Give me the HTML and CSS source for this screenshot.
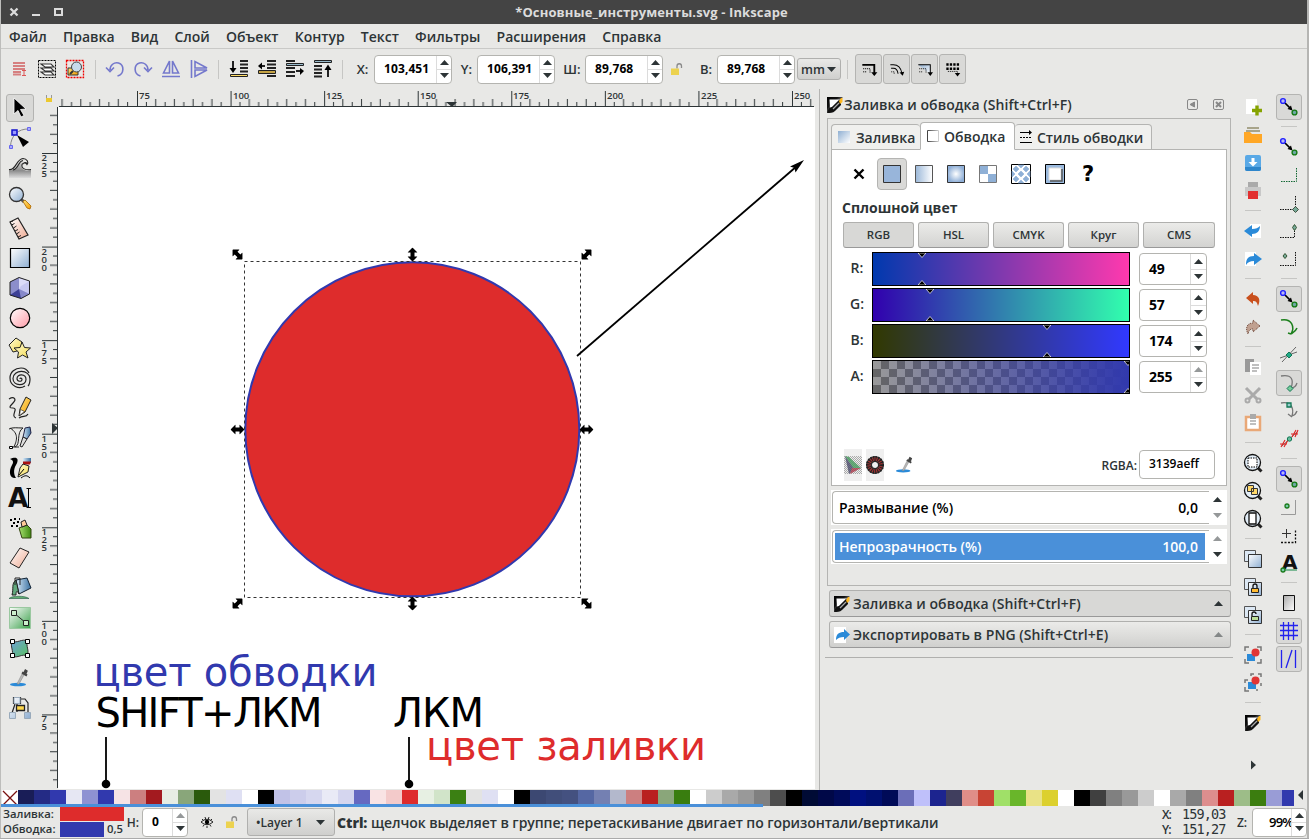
FILE: index.html
```html
<!DOCTYPE html>
<html lang="ru">
<head>
<meta charset="utf-8">
<title>*Основные_инструменты.svg - Inkscape</title>
<link rel="stylesheet" href="styles.css">
</head>
<body>
<svg class="defs" width="0" height="0">
  <defs>
    <linearGradient id="blue" x1="0" y1="0" x2="1" y2="1"><stop offset="0" stop-color="#fff"/><stop offset="1" stop-color="#8fafd2"/></linearGradient>
    <linearGradient id="blueR" x1="1" y1="1" x2="0" y2="0"><stop offset="0" stop-color="#fff"/><stop offset="1" stop-color="#8fafd2"/></linearGradient>
    <linearGradient id="flat" x1="0" y1="0" x2="1" y2="0"><stop offset="0" stop-color="#9bb8d9"/><stop offset="1" stop-color="#fff"/></linearGradient>
    <radialGradient id="rad"><stop offset="0" stop-color="#fff"/><stop offset="1" stop-color="#90b0d8"/></radialGradient>
    <linearGradient id="pink" x1="0" y1="0" x2="1" y2="1"><stop offset="0" stop-color="#fff"/><stop offset="1" stop-color="#ff9aa6"/></linearGradient>
    <linearGradient id="skin" x1="0" y1="0" x2="1" y2="1"><stop offset="0" stop-color="#fff"/><stop offset="1" stop-color="#eeaa92"/></linearGradient>
    <linearGradient id="yel" x1="0" y1="0" x2="1" y2="1"><stop offset="0" stop-color="#fffbd8"/><stop offset="1" stop-color="#f4dc50"/></linearGradient>
    <linearGradient id="orange" x1="0" y1="0" x2="1" y2="1"><stop offset="0" stop-color="#ffe680"/><stop offset="1" stop-color="#f29a00"/></linearGradient>
    <linearGradient id="green" x1="0" y1="0" x2="1" y2="1"><stop offset="0" stop-color="#fff"/><stop offset="1" stop-color="#3aa04a"/></linearGradient>
    <linearGradient id="grey" x1="0" y1="0" x2="1" y2="1"><stop offset="0" stop-color="#aaa"/><stop offset="1" stop-color="#fff"/></linearGradient>
    <linearGradient id="wave" x1="0" y1="0" x2="0" y2="1"><stop offset="0" stop-color="#e8e8e6"/><stop offset=".6" stop-color="#8c8c8c"/><stop offset="1" stop-color="#ddd"/></linearGradient>
    <linearGradient id="teal" x1="0" y1="0" x2="1" y2="1"><stop offset="0" stop-color="#6fa0d8"/><stop offset="1" stop-color="#58c060"/></linearGradient>
    <linearGradient id="can" x1="0" y1="0" x2="1" y2="0"><stop offset="0" stop-color="#a8e070"/><stop offset="1" stop-color="#3d8a10"/></linearGradient>
    <linearGradient id="steel" x1="0" y1="0" x2="1" y2="0"><stop offset="0" stop-color="#d8eaf8"/><stop offset="1" stop-color="#3a70a0"/></linearGradient>
    <linearGradient id="ink" x1="0" y1="0" x2="1" y2="1"><stop offset="0" stop-color="#000"/><stop offset=".35" stop-color="#111"/><stop offset=".75" stop-color="#ddd"/><stop offset="1" stop-color="#e8e8e6"/></linearGradient>
    <linearGradient id="fade" x1="0" y1="0" x2="1" y2="0"><stop offset="0" stop-color="#444"/><stop offset="1" stop-color="#ccc"/></linearGradient>
    <linearGradient id="alpha" x1="0" y1="0" x2="1" y2="0"><stop offset="0" stop-color="#3139ae" stop-opacity="0"/><stop offset="1" stop-color="#3139ae"/></linearGradient>
    <pattern id="checks" width="16" height="16" patternUnits="userSpaceOnUse"><rect width="16" height="16" fill="#999"/><path d="M0 8h8v8H0zM8 0h8v8H8z" fill="#666"/></pattern>
    <pattern id="dither" width="2" height="2" patternUnits="userSpaceOnUse"><path d="M0 0h1v1H0zM1 1h1v1H1z" fill="#eee"/></pattern>
    <symbol id="up" viewBox="0 0 9 5"><path d="M0 5L4.500 0 9 5z"/></symbol>
    <symbol id="down" viewBox="0 0 9 5"><path d="M0 0h9L4.500 5z"/></symbol>
    <symbol id="lock" viewBox="0 0 12 12"><path d="M6 5.500V3a2 2 0 0 1 4.500 0v2" fill="none" stroke="#8a8a8a" stroke-width="1.300"/><path d="M0 5.500h8V12H0z" fill="#ecd24f"/></symbol>
    <symbol id="fillstroke" viewBox="0 0 16 16"><path d="M0 0h16L0 16z" fill="url(#ink)"/><path d="M2.500 2.500H13L3 12z" fill="#fff"/><path d="M0 16c1-3 2-6 5-6l7-7 2 1v4l-6 6c-2 2-5 2-8 2z" fill="#111"/><path d="M6 12l6-6" stroke="#aaa" stroke-width="1.200"/><path d="M12 4l2-3h1.500v4L13 7z" fill="#ffb820"/></symbol>
    <symbol id="dropper" viewBox="0 0 22 22"><ellipse cx="9" cy="17.500" rx="8" ry="1.700" fill="#2a8ad8"/><path d="M8 17l5-10 2 1-5 9z" fill="#bbb" stroke="#888" stroke-width=".6"/><path d="M13 5.500l5 3M15.500 5.500l1-2 1 .6-.8 2z" fill="#444" stroke="#444" stroke-width="2.200"/></symbol>
    <symbol id="snap" viewBox="0 0 22 22"><path d="M7 7l6 6" stroke="#000" stroke-width="1.700"/><path d="M14.500 14.500l-5-1.500 3.500-3.500z"/><circle cx="5" cy="5" r="2.400" fill="#b9b9f4" stroke="#22f" stroke-width="1.400"/><circle cx="16.500" cy="16.500" r="2.400" fill="#6fa8a8" stroke="#157a15" stroke-width="1.400"/></symbol>
    <symbol id="lens" viewBox="0 0 22 22"><path d="M15 15l4.500 4.500" stroke="#222" stroke-width="3"/><circle cx="10.500" cy="10.500" r="8" fill="#e2edf7" stroke="#111" stroke-width="1.300"/></symbol>
    <symbol id="stack" viewBox="0 0 22 22"><path d="M2.500 2.500h11v11h-11z" fill="#dce8f4" stroke="#555"/><path d="M6.500 6.500h13v13h-13z" fill="url(#blue)" stroke="#333"/></symbol>
    <symbol id="resize" viewBox="0 0 14 10"><path d="M0 5l5-5v3h4V0l5 5-5 5V7H5v3z"/></symbol>
    <symbol id="mark" viewBox="0 0 8 5"><path d="M0 0h8L4 4.500z" stroke="#fff" stroke-width=".7"/></symbol>
  </defs>
</svg>

<div class="window">
  <header class="titlebar">
    <svg class="wm" viewBox="0 0 60 24"><path d="M9.500 8.500l7 7M16.500 8.500l-7 7" stroke-width="2.300"/><path d="M31 15h8" stroke-width="2"/><path d="M54 9h7v6h-7z" stroke-width="2"/></svg>
    <span class="title">*Основные_инструменты.svg - Inkscape</span>
  </header>

  <nav class="menu"><span>Файл</span><span>Правка</span><span>Вид</span><span>Слой</span><span>Объект</span><span>Контур</span><span>Текст</span><span>Фильтры</span><span>Расширения</span><span>Справка</span></nav>

  <div class="toolbar">
    <svg class="ic" viewBox="0 0 22 22"><path d="M5 5h12M5 8h12M5 11h12M5 14h8M5 16.500h8" stroke="#d68080" stroke-width="2.200"/><path d="M14 12.500h4M16 12.500v5M14 17.500h4" stroke="#d55" fill="none"/></svg>
    <svg class="ic" viewBox="0 0 22 22"><path d="M2.500 2.500h17v17h-17z" fill="none" stroke="#000" stroke-dasharray="2 1"/><path d="M5 14l4 3h9l-3-3zM5 10l4 3h9l-3-3zM5 6l4 3h9l-3-3z" fill="#fff" stroke="#333" stroke-width="1.100"/></svg>
    <svg class="ic" viewBox="0 0 22 22"><path d="M2.500 2.500h17v17h-17z" fill="none" stroke="#e00" stroke-width="1.300" stroke-dasharray="2 1"/><path d="M4 10h10v7H4z" fill="url(#orange)" stroke="#333"/><path d="M9 13l-3 3" stroke="#333" stroke-width="2"/><circle cx="12.500" cy="9" r="5" fill="#c8dcec" stroke="#444"/></svg>
    <i class="vsep"></i>
    <svg class="ic line" viewBox="0 0 22 22"><path d="M6 12C6 7 10 4 14.500 5c6 2 6 11-1 13M2 9.500l4 4 4-4"/></svg>
    <svg class="ic line" viewBox="0 0 22 22"><path d="M16 12c0-5-4-8-8.500-7-6 2-6 11 1 13M20 9.500l-4 4-4-4"/></svg>
    <svg class="ic line" viewBox="0 0 22 22"><path d="M9.500 3v12h-6zM12.500 3v12h6zM2 18.500h18"/></svg>
    <svg class="ic line" viewBox="0 0 22 22"><path d="M3.500 2v18M7 3.500v6.500h12zM7 18.500V12h12z"/></svg>
    <i class="vsep"></i>
    <svg class="ic" viewBox="0 0 22 22"><path d="M12 3h8M12 6.500h8M12 10h8M12 13.500h8M5 3v10" stroke="#222" stroke-width="2"/><path d="M1.500 10h7L5 15z"/><path d="M2.500 16.500h17v2h-17z" fill="#fd6" stroke="#222"/></svg>
    <svg class="ic" viewBox="0 0 22 22"><path d="M11 3h9M11 6.500h9M11 10h9M11 18h9M5 8h4" stroke="#222" stroke-width="2"/><path d="M6 4.500v7L2 8z"/><path d="M2.500 12.500h17v3h-17z" fill="#c6a445" stroke="#222"/></svg>
    <svg class="ic" viewBox="0 0 22 22"><path d="M2 3h9M2 10h9M2 14h9M2 18h9M12 13h5" stroke="#222" stroke-width="2"/><path d="M16 10v7l4-4z"/><path d="M2.500 5.500h17v2h-17z" fill="#9bc" stroke="#222"/></svg>
    <svg class="ic" viewBox="0 0 22 22"><path d="M2 8h8M2 11.500h8M2 15h8M2 18.500h8M16 9v10" stroke="#222" stroke-width="2"/><path d="M12.500 12h7L16 6.500z"/><path d="M2.500 2.500h17v2h-17z" fill="#9bc" stroke="#222"/></svg>
    <i class="vsep"></i>
    <label>X:</label>
    <div class="spin"><b>103,451</b><span><svg><use href="#up"/></svg><svg><use href="#down"/></svg></span></div>
    <label>Y:</label>
    <div class="spin"><b>106,391</b><span><svg><use href="#up"/></svg><svg><use href="#down"/></svg></span></div>
    <label>Ш:</label>
    <div class="spin"><b>89,768</b><span><svg><use href="#up"/></svg><svg><use href="#down"/></svg></span></div>
    <svg class="lock"><use href="#lock"/></svg>
    <label>В:</label>
    <div class="spin"><b>89,768</b><span><svg><use href="#up"/></svg><svg><use href="#down"/></svg></span></div>
    <i></i>
    <div class="combo unit"><span>mm</span><svg><use href="#down"/></svg></div>
    <i class="vsep"></i>
    <div class="tog"><svg class="ic" viewBox="0 0 22 22"><path d="M3 5h15.500v12" fill="none" stroke="#000" stroke-width="2.400"/><path d="M4 10h9v6M4 14h5" fill="none" stroke="#000" stroke-width="1.200" stroke-dasharray="1.500 1"/><path d="M14.500 14.500h8l-4 5z"/></svg></div>
    <div class="tog"><svg class="ic" viewBox="0 0 22 22"><path d="M3 5h4q9 0 11 11M4 9.500h3q5 0 6 7" fill="none" stroke="#000" stroke-width="1.300"/><path d="M4 14h4v3" fill="none" stroke="#000" stroke-dasharray="1.500 1"/><path d="M15 15l6-1-2 5z"/></svg></div>
    <div class="tog"><svg class="ic" viewBox="0 0 22 22"><path d="M3 5h15.500v12z" fill="url(#blueR)"/><path d="M3 5h15.500v12" fill="none" stroke="#000" stroke-width="1.300"/><path d="M4 10h9v6M4 14h5" fill="none" stroke="#000" stroke-dasharray="1.500 1"/><path d="M15 14.500h7l-3.500 5z"/></svg></div>
    <div class="tog"><svg class="ic" viewBox="0 0 22 22"><path d="M3 4.500h17M3 10h17" stroke="#000" stroke-width="3" stroke-dasharray="3 1.500"/><path d="M5 13.500h12.500v3" fill="none" stroke="#000" stroke-dasharray="1.500 1"/><path d="M14 15.500h7l-3.500 4.500z"/></svg></div>
  </div>

  <main class="work">
    <aside class="tools">
      <div class="on"><svg viewBox="0 0 22 22"><path d="M5 1l12 11-5.500.5 3.500 6-3 1.500-3-6.500L5 17z" stroke="#fff" stroke-width=".8"/></svg></div>
      <div><svg viewBox="0 0 22 22"><path d="M1.500 19C2 9 9 1.500 20 2" fill="none" stroke="#888"/><path d="M8 8l12 7-6 5z"/><path d="M3 3h5v5H3z" fill="#99f" stroke="#11c" stroke-width="1.500"/><path d="M18.500.5h3v3h-3zM.5 18.500h3v3h-3z" fill="#aaf" stroke="#66e"/></svg></div>
      <div><svg viewBox="0 0 22 22"><path d="M0 13c4 1 6-1 8-5 2-5 5-6 8-5-3 2-5 6-2 9 2 2 5 2 8 1v8H0z" fill="url(#wave)"/><path d="M0 12.500C7 14 7 2 14 1.500c4 0 6 4 4 6-1-2-4-2-5 0-1 4 4 6 9 5M4 13c6-1 5-9 10-9.500M14 7c1-2 3-2 4-.5" fill="none" stroke="#222" stroke-width="1.100"/></svg></div>
      <div><svg viewBox="0 0 22 22"><path d="M12 12l3 3" stroke="#555" stroke-width="3"/><circle cx="7.500" cy="7.500" r="7" fill="url(#blue)" stroke="#333" stroke-width="1.300"/><path d="M14 14.500l2-1.500 6 6-1 3-3-1z" fill="url(#orange)" stroke="#a60" stroke-width=".8"/></svg></div>
      <div><svg viewBox="0 0 22 22"><path d="M1 5l8-4 10 17-9 4z" fill="url(#skin)" stroke="#222" stroke-width="1.200"/><path d="M1 5l3-1M2.500 8l3-1.500M4.500 11l3-2M6 14l3-1.500M7.500 17l3-2M9 20l3-1.500" stroke="#222"/></svg></div>
      <div><svg viewBox="0 0 22 22"><path d="M1.500 1.500h19v19h-19z" fill="url(#blue)" stroke="#000" stroke-width="1.200"/></svg></div>
      <div><svg viewBox="0 0 22 22"><path d="M1 5l9-4.500L20.500 4v13L12 21.500 1 18z" fill="#a5a7dc"/><path d="M10 1v11l-9 6V5z" fill="#8c8ecb"/><path d="M10 1l10.500 3v13L10 12z" fill="#dcdcf8"/><path d="M10 12l10.500 5-8.500 4.500L1 18z" fill="#3d4096"/><path d="M12 9l-2 3 2 9.500 8.500-4.500V4z" fill="#b9baec" opacity=".6"/><path d="M1 5l9-4.500L20.500 4v13L12 21.500 1 18z" fill="none" stroke="#222"/></svg></div>
      <div><svg viewBox="0 0 22 22"><circle cx="11" cy="11" r="9.700" fill="url(#pink)" stroke="#000" stroke-width="1.200"/></svg></div>
      <div><svg viewBox="0 0 22 22"><path d="M7 1l6 4-1 8-8 2-4-7z" fill="url(#yel)" stroke="#222"/><path d="M13 5l2.500 5.500 6 .5-4.500 4 2 6-5.500-3-5 3 1-6-4.500-4 6-.5z" fill="url(#yel)" stroke="#222"/></svg></div>
      <div><svg viewBox="0 0 22 22"><path d="M11 12c0-1.500 2-1 2 .5 0 2.500-5 2.500-5-1 0-5 9-5 9 1 0 7-13 7-13-1C4 2 21 2 21 12c0 3-1 6-2 7M16 19C10 23 1 19 1 11 1 5 6 1 12 1c4 0 7 3 8 5" fill="none" stroke="#222" stroke-width="1.200"/></svg></div>
      <div><svg viewBox="0 0 22 22"><path d="M0 2c5-3 8 0 4 4-5 5-3 5 0 5 6 0-3 8 3 10M19 17c-2 4-5 1-9 4" fill="none" stroke="#222" stroke-width="1.200"/><path d="M10 19l1-7 6-12 5 3-6 12z" fill="url(#orange)" stroke="#222"/><path d="M10.500 18.500l1-6 4 2z" fill="#fff" stroke="#222" stroke-width=".6"/></svg></div>
      <div><svg viewBox="0 0 22 22"><path d="M0 2c4-2 8-1 14-1C7 5 12 18 6 20M1 20h9M1 1c10 6 6 14 4 19" fill="none" stroke="#222"/><path d="M15 6l1-5 5-1 1 6-4 6-4-2z" fill="url(#steel)" stroke="#224"/><path d="M11 19l3-9 4 2-5 8z" fill="#ddd" stroke="#222"/><path d="M.5 19.500h3v2h-3z" fill="#fff" stroke="#000"/></svg></div>
      <div><svg viewBox="0 0 22 22"><path d="M1 2C7-1 11 1 7 8c-3 5-2 10 0 13C1 22-1 15 3 8c2-3 1-5-2-6z"/><path d="M14 1h8v5h-8z" fill="url(#steel)"/><path d="M14 4.500h8l-1 3h-7z" fill="#a11"/><path d="M9 20l2-9 3-4 6 2-1 6z" fill="url(#yel)" stroke="#222"/><path d="M10 18l5-6M12 21c4-3 6-3 9 0" stroke="#000" fill="none"/></svg></div>
      <div><svg viewBox="0 0 22 22"><text x="-1" y="19.500" class="glyph">A</text><path d="M17.500 1.500h4.500M19.500 1.500v19M17.500 20.500h4.500" stroke="#000"/></svg></div>
      <div><svg viewBox="0 0 22 22"><path d="M1 2h2v2H1zM5 1h2v2H5zM4 5h2v2H4zM8 4h2v2H8zM2 8h2v2H2zM7 8h2v2H7zM10 1h1v2h-1z"/><path d="M10 11l8-3 4 4v9H13z" fill="url(#can)" stroke="#341"/><path d="M12 5l4-2 2 5-5 2z" fill="#fc9" stroke="#222"/></svg></div>
      <div><svg viewBox="0 0 22 22"><path d="M11 1l9 4-10 16-9-5z" fill="url(#skin)" stroke="#222"/></svg></div>
      <div><svg viewBox="0 0 22 22"><path d="M7 3l11-2 4 10-12 6z" fill="url(#steel)" stroke="#123"/><path d="M7 3C2 7 5 11 3 18h4c0-4 1-5 3-1L7 3z" fill="#61a87c" stroke="#222"/><path d="M0 21.500c3-3 16-3 20 0z" fill="#61b070" stroke="#254" stroke-width=".6"/><path d="M6 8V1h5v7" fill="none" stroke="#222"/></svg></div>
      <div><svg viewBox="0 0 22 22"><path d="M.5.5h21v21H.5z" fill="url(#green)" stroke="#9ac8a0"/><path d="M5 6l12 10" stroke="#222"/><path d="M2.500 3.500h5v5h-5zM14.500 13.500h5v5h-5z" fill="#cec" stroke="#222"/></svg></div>
      <div><svg viewBox="0 0 22 22"><path d="M3 4c5 3 10-3 16 0-3 5 2 9-1 15-5-3-9 3-15 0 2-5-2-9 0-15z" fill="url(#teal)" stroke="#333"/><path d="M1.500 2.500h4v4h-4zM16.500 2.500h4v4h-4zM1.500 16.500h4v4h-4zM16.500 16.500h4v4h-4z" fill="#fff" stroke="#000"/></svg></div>
      <div><svg><use href="#dropper"/></svg></div>
      <div><svg viewBox="0 0 22 22"><path d="M6 7L3 16M12 2h4l3 4v10M4.500 0v7M11.500 0v7M8 7v8" fill="none" stroke="#222" stroke-width="1.200"/><path d="M5 .5h6v6H5zM.5 15.500h6v6h-6zM15.500 15.500h6v6h-6z" fill="url(#blue)" stroke="#9ab"/><path d="M7.500 8.500h8v5h-8z" fill="#ffd84d" stroke="#222" stroke-width="1.300"/></svg></div>
    </aside>

    <svg class="paper" width="775" height="701" viewBox="40 89 775 701">
      <defs>
        <pattern id="hticks" x="137" y="89" width="93.570" height="18" patternUnits="userSpaceOnUse"><path d="M.5 2v16M18.700 10v8M37.400 10v8M56.100 10v8M74.900 10v8M9.400 13v5M28.100 13v5M46.800 13v5M65.500 13v5M84.200 13v5"/></pattern>
        <pattern id="vticks" x="40" y="153" width="18" height="93.570" patternUnits="userSpaceOnUse"><path d="M2 .5h16M10 18.700h8M10 37.400h8M10 56.100h8M10 74.900h8M13 9.400h5M13 28.100h5M13 46.800h5M13 65.500h5M13 84.200h5"/></pattern>
      </defs>
      <rect x="58" y="107" width="757" height="682" fill="#fff"/>
      <rect x="60" y="89" width="755" height="18" fill="url(#hticks)"/>
      <rect x="40" y="108" width="18" height="680" fill="url(#vticks)"/>
      <path class="edge" d="M59 106.500h755M57.500 107v681"/>
      <path d="M446 102h11l-5 5zM52 423l6 5-6 6z" fill="#2d3436"/>
      <path d="M46 98h6v4h-6z" fill="#ecc92f"/><path d="M46.500 95v3M51.500 95v3" stroke="#999"/>
      <g class="rl"><text x="139" y="99">75</text><text x="233" y="99">100</text><text x="326" y="99">125</text><text x="420" y="99">150</text><text x="513" y="99">175</text><text x="607" y="99">200</text><text x="701" y="99">225</text><text x="794" y="99">250</text></g>
      <g class="rl"><text x="41.500" y="161">2</text><text x="41.500" y="169">2</text><text x="41.500" y="177">5</text><text x="41.500" y="255">2</text><text x="41.500" y="263">0</text><text x="41.500" y="271">0</text><text x="41.500" y="348">1</text><text x="41.500" y="356">7</text><text x="41.500" y="364">5</text><text x="41.500" y="442">1</text><text x="41.500" y="450">5</text><text x="41.500" y="458">0</text><text x="41.500" y="535">1</text><text x="41.500" y="543">2</text><text x="41.500" y="551">5</text><text x="41.500" y="629">1</text><text x="41.500" y="637">0</text><text x="41.500" y="645">0</text><text x="41.500" y="722">7</text><text x="41.500" y="730">5</text></g>
      <circle cx="412.300" cy="429.300" r="167" fill="#de2c2c" stroke="#3139ae" stroke-width="2"/>
      <path d="M244.500 261.500h336v336h-336z" fill="none" stroke="#333" stroke-dasharray="3 3"/>
      <g>
        <use href="#resize" x="-7" y="-5" width="14" height="10" transform="translate(237.500 254.500) rotate(45)"/>
        <use href="#resize" x="-7" y="-5" width="14" height="10" transform="translate(586.500 254.500) rotate(-45)"/>
        <use href="#resize" x="-7" y="-5" width="14" height="10" transform="translate(237.500 603.500) rotate(-45)"/>
        <use href="#resize" x="-7" y="-5" width="14" height="10" transform="translate(586.500 603.500) rotate(45)"/>
        <use href="#resize" x="-7" y="-5" width="14" height="10" transform="translate(412.500 254.500) rotate(90)"/>
        <use href="#resize" x="-7" y="-5" width="14" height="10" transform="translate(412.500 603.500) rotate(90)"/>
        <use href="#resize" x="230.500" y="424.500" width="14" height="10"/>
        <use href="#resize" x="579.500" y="424.500" width="14" height="10"/>
      </g>
      <path d="M577 356L797 166" stroke="#000" stroke-width="1.800"/>
      <path d="M804 160l-8.500 12.500-1-4.500-4.500-1.500z"/>
      <path d="M106 737v46M409 737v46" stroke="#000" stroke-width="1.800"/>
      <circle cx="106" cy="784" r="4.300"/><circle cx="409" cy="784" r="4.300"/>
      <g class="note">
        <text x="93.500" y="685.500" fill="#3139ae" textLength="284">цвет обводки</text>
        <text x="95.500" y="727.300" textLength="227">SHIFT+ЛКМ</text>
        <text x="393" y="727.300" textLength="91">ЛКМ</text>
        <text x="426" y="759.500" fill="#de2c2c" textLength="280">цвет заливки</text>
      </g>
    </svg>

    <section class="dock">
      <div class="dock-head"><svg class="fs"><use href="#fillstroke"/></svg><span class="ttl">Заливка и обводка (Shift+Ctrl+F)</span>
        <svg class="mini" viewBox="0 0 11 11"><rect x=".5" y=".5" width="10" height="10" rx="1.500"/><path d="M7.500 3v5L3 5.500z" fill="#888"/></svg>
        <svg class="mini" viewBox="0 0 11 11"><rect x=".5" y=".5" width="10" height="10" rx="1.500"/><path d="M3 3l5 5M8 3L3 8" stroke-width="2"/></svg>
      </div>
      <div class="frame">
        <div class="tabs">
          <div class="tab t1"><svg viewBox="0 0 12 12"><path d="M0 0h12v12H0z" fill="url(#blueR)"/></svg><span>Заливка</span></div>
          <div class="tab t2"><svg viewBox="0 0 12 12"><path d="M.5.5h11v11H.5z" fill="#fff" stroke="url(#fade)"/></svg><span>Обводка</span></div>
          <div class="tab t3"><svg viewBox="0 0 12 12"><path d="M0 1.500h10M0 11.500h12" stroke="#000" stroke-width="1.200"/><path d="M0 6.500h12" stroke="#000" stroke-dasharray="2 1"/><path d="M9-1l3 2.500L9 4z"/></svg><span>Стиль обводки</span></div>
        </div>
        <div class="page">
          <div class="paints">
            <div><svg viewBox="0 0 20 20"><path d="M6.500 5.500l9 9M15.500 5.500l-9 9" stroke="#000" stroke-width="2.400"/></svg></div>
            <div class="on"><svg viewBox="0 0 20 20"><path d="M1.500 1.500h17v17h-17z" fill="#98b5da" stroke="#333"/></svg></div>
            <div><svg viewBox="0 0 20 20"><path d="M1.500 1.500h17v17h-17z" fill="url(#flat)" stroke="#555"/></svg></div>
            <div><svg viewBox="0 0 20 20"><path d="M1.500 1.500h17v17h-17z" fill="url(#rad)" stroke="#333"/></svg></div>
            <div><svg viewBox="0 0 20 20"><path d="M1.500 1.500h17v17h-17z" fill="#fff" stroke="#777"/><path d="M2 2h8v8H2zM10 10h8v8h-8z" fill="#8fb0d6"/></svg></div>
            <div><svg viewBox="0 0 20 20"><path d="M.5.5h19v19H.5z" fill="#fff" stroke="#000"/><path d="M5 2l3 3-3 3-3-3zM10 7l3 3-3 3-3-3zM15 2l3 3-3 3-3-3zM5 12l3 3-3 3-3-3zM15 12l3 3-3 3-3-3zM1 7l3 3-3 3zM19 7l-3 3 3 3zM7 1h6l-3 3zM7 19h6l-3-3z" fill="#8fb0d6" stroke="#8fb0d6" stroke-width=".6"/></svg></div>
            <div><svg viewBox="0 0 20 20"><path d="M.5.5h19v19H.5z" fill="#9bbade" stroke="#000"/><path d="M4 4h12v12H4z" fill="#fff" stroke="#ddd"/><path d="M5 17h12V5" fill="none" stroke="#555" stroke-width="1.500"/></svg></div>
            <div><span class="q">?</span></div>
          </div>
          <h3>Сплошной цвет</h3>
          <div class="modes"><span class="on">RGB</span><span>HSL</span><span>CMYK</span><span>Круг</span><span>CMS</span></div>
          <div class="chan"><label>R:</label><div class="bar r"><svg viewBox="0 0 256 32"><use href="#mark" x="45" y="0" width="8" height="5"/><use href="#mark" width="8" height="5" transform="translate(45 32) scale(1 -1)"/></svg></div><div class="spin"><b>49</b><span><svg><use href="#up"/></svg><svg><use href="#down"/></svg></span></div></div>
          <div class="chan"><label>G:</label><div class="bar g"><svg viewBox="0 0 256 32"><use href="#mark" x="53" y="0" width="8" height="5"/><use href="#mark" width="8" height="5" transform="translate(53 32) scale(1 -1)"/></svg></div><div class="spin"><b>57</b><span><svg><use href="#up"/></svg><svg><use href="#down"/></svg></span></div></div>
          <div class="chan"><label>B:</label><div class="bar b"><svg viewBox="0 0 256 32"><use href="#mark" x="170" y="0" width="8" height="5"/><use href="#mark" width="8" height="5" transform="translate(170 32) scale(1 -1)"/></svg></div><div class="spin"><b>174</b><span><svg><use href="#up"/></svg><svg><use href="#down"/></svg></span></div></div>
          <div class="chan"><label>A:</label><div class="bar"><svg viewBox="0 0 256 32"><path d="M0 0h256v32H0z" fill="url(#checks)"/><path d="M0 0h256v32H0z" fill="url(#alpha)"/><use href="#mark" x="251" y="0" width="8" height="5"/><use href="#mark" width="8" height="5" transform="translate(251 32) scale(1 -1)"/></svg></div><div class="spin"><b>255</b><span><svg class="dim"><use href="#up"/></svg><svg><use href="#down"/></svg></span></div></div>
          <div class="rgba">
            <svg class="cm" viewBox="0 0 18 32"><path d="M0 0h18v32H0z" fill="#efefef"/><path d="M0 7h18v18H0z" fill="#aaa"/><path d="M0 7h18v18H0z" fill="url(#dither)"/><g opacity=".75"><path d="M1 7l4 1 12 11-7 2z" fill="#3f9a58"/><path d="M1 7l9 13-5 5z" fill="#446"/><path d="M8 19l9 0-11 6z" fill="#a34"/></g></svg>
            <svg class="cm" viewBox="0 0 18 32"><path d="M0 0h18v32H0z" fill="#efefef"/><circle cx="9" cy="16" r="6" fill="none" stroke="#333" stroke-width="6"/><circle cx="9" cy="16" r="6" fill="none" stroke="#a33" stroke-width="3.500"/><circle cx="9" cy="16" r="6" fill="none" stroke="#222" stroke-width="6" stroke-dasharray="1 1"/></svg>
            <svg class="dp"><use href="#dropper"/></svg>
            <label>RGBA:</label><div class="hex">3139aeff</div>
          </div>
        </div>
        <div class="slide"><div class="box"><span>Размывание (%)</span><span>0,0</span></div><span class="ar"><svg><use href="#up"/></svg><svg class="dim"><use href="#down"/></svg></span></div>
        <div class="slide full"><div class="box"><div class="fill"><span>Непрозрачность (%)</span><span>100,0</span></div></div><span class="ar"><svg class="dim"><use href="#up"/></svg><svg><use href="#down"/></svg></span></div>
      </div>
      <div class="iconified dark"><svg class="fs"><use href="#fillstroke"/></svg><span class="ttl">Заливка и обводка (Shift+Ctrl+F)</span><svg class="tri"><use href="#up"/></svg></div>
      <div class="iconified"><svg class="fs" viewBox="0 0 16 16"><path d="M0 0h12v16H0z" fill="#fff"/><path d="M2 13c0-6 3-8 8-8V2l6 5.500L10 13v-3c-4 0-6 1-8 3z" fill="#2a8ad8"/></svg><span class="ttl e">Экспортировать в PNG (Shift+Ctrl+E)</span><svg class="tri dim"><use href="#up"/></svg></div>
      <hr>
    </section>

    <aside class="cmds">
      <div><svg viewBox="0 0 22 22"><path d="M4 3h11v15H4z" fill="#fff"/><path d="M10 14.500h10M15 9.500v10" stroke="#86a300" stroke-width="3.400"/></svg></div>
      <div><svg viewBox="0 0 22 22"><path d="M5 4h12M4 7h14" stroke="#938d6c" stroke-width="1.500"/><path d="M2 8h6l2 2h10v9H2z" fill="#ffa726"/></svg></div>
      <div><svg viewBox="0 0 22 22"><rect x="3" y="3" width="16" height="16" rx="2" fill="#5aa9e6"/><path d="M3 15h16v2a2 2 0 0 1-2 2H5a2 2 0 0 1-2-2z" fill="#2e86cb"/><path d="M9.500 6h3v4h3L11 14.500 6.500 10h3z" fill="#fff"/></svg></div>
      <div><svg viewBox="0 0 22 22"><path d="M6 2h10v5H6z" fill="#aaa"/><path d="M3 7h16v9H3z" fill="#c8c8c8"/><path d="M6 11h10v8H6z" fill="#e23030"/></svg></div>
      <hr>
      <div><svg viewBox="0 0 22 22"><path d="M8 4h11v14H8z" fill="#fff"/><path d="M2 11l8-6v4c4 0 6-1 8-3 0 5-3 8-8 8v3z" fill="#2a8ad8"/></svg></div>
      <div><svg viewBox="0 0 22 22"><path d="M3 4h11v14H3z" fill="#fff"/><path d="M20 11l-8-6v3c-6 0-8 3-8 9 2-3 4-4 8-4v4z" fill="#2a8ad8"/></svg></div>
      <hr>
      <div><svg viewBox="0 0 22 22"><path d="M4 10l7-6v3c6 0 8 5 5 11-1-4-2-5-5-5v3z" fill="#c9501d"/></svg></div>
      <div><svg viewBox="0 0 22 22"><path d="M18 10l-7-6v3c-6 0-8 5-5 11 1-4 2-5 5-5v3z" fill="#c0a090" stroke="#6b4335" stroke-dasharray="1 1"/></svg></div>
      <hr>
      <div><svg viewBox="0 0 22 22"><path d="M3 3h9v13H3z" fill="#999"/><path d="M8 6h11v13H8z" fill="#fff"/><path d="M10 9h7M10 12h7M10 15h5" stroke="#aaa" stroke-width="1.500"/></svg></div>
      <div><svg viewBox="0 0 22 22" fill="none" stroke="#aaa" stroke-width="2"><path d="M4 4l11 11M18 4L7 15" stroke-width="3"/><circle cx="5.500" cy="16.500" r="2"/><circle cx="16.500" cy="16.500" r="2"/></svg></div>
      <div><svg viewBox="0 0 22 22"><path d="M4 5h14v13H4z" fill="#fff" stroke="#e9a877" stroke-width="2.500"/><path d="M8 2h6v5H8z" fill="#aaa"/><path d="M8 9h6M8 12h6" stroke="#aaa" stroke-width="1.500"/></svg></div>
      <hr>
      <div><svg viewBox="0 0 22 22"><use href="#lens"/><path d="M6 6h9v9H6z" fill="#fff" stroke="#000" stroke-dasharray="1.500 1"/></svg></div>
      <div><svg viewBox="0 0 22 22"><use href="#lens"/><path d="M5.500 5.500h6v6h-6zM9.500 8.500h6v6h-6z" fill="#ffd96a" stroke="#333"/></svg></div>
      <div><svg viewBox="0 0 22 22"><use href="#lens"/><path d="M7 5h7v11H7z" fill="#fff" stroke="#111" stroke-width="1.300"/></svg></div>
      <hr>
      <div><svg><use href="#stack"/></svg></div>
      <div><svg viewBox="0 0 22 22"><use href="#stack"/><path d="M11 12v-2a2 2 0 0 1 4 0v2" fill="none" stroke="#111" stroke-width="1.300"/><path d="M9.500 12.500h7v4h-7z" fill="#fb3" stroke="#222"/></svg></div>
      <div><svg viewBox="0 0 22 22"><use href="#stack"/><path d="M10 12v-2a2 2 0 0 1 4 0" fill="none" stroke="#111" stroke-width="1.300"/><path d="M9.500 12.500h7v4h-7z" fill="#bd9" stroke="#222"/></svg></div>
      <hr>
      <div><svg viewBox="0 0 22 22"><path d="M3 7V3h4M15 3h4v4M19 15v4h-4M7 19H3v-4" fill="none" stroke="#777" stroke-width="1.500"/><path d="M5 10h8v7H5z" fill="#2a8ad8"/><circle cx="13.500" cy="8.500" r="4" fill="#e03535"/></svg></div>
      <div><svg viewBox="0 0 22 22"><path d="M3 11V8h3M9 4V2h3M16 2h3v3M19 11v3M16 18h-2M7 19H3v-4" fill="none" stroke="#777" stroke-width="1.500"/><path d="M6 10h8v7H6z" fill="#2a8ad8"/><circle cx="13.500" cy="8.500" r="4" fill="#e03535"/></svg></div>
      <hr>
      <div><svg class="fs"><use href="#fillstroke"/></svg></div>
      <div class="more"><svg viewBox="0 0 22 22"><path d="M9 6.500l5 4.500-5 4.500z" fill="#2d3436"/></svg></div>
    </aside>

    <aside class="cmds snaps">
      <div class="on"><svg><use href="#snap"/></svg></div>
      <hr>
      <div><svg><use href="#snap"/></svg></div>
      <div><svg viewBox="0 0 22 22"><path d="M3 17.500h15.500V3" fill="none" stroke="#163" stroke-dasharray="1.500 1"/></svg></div>
      <div><svg viewBox="0 0 22 22"><path d="M2 17.500h15.500V3" fill="none" stroke="#111" stroke-dasharray="1.500 1"/><path d="M17.500 14.500l3 3-3 3-3-3z" fill="#7a9" stroke="#454"/></svg></div>
      <div><svg viewBox="0 0 22 22"><path d="M2 17.500h14.500V6" fill="none" stroke="#111" stroke-dasharray="1.500 1"/><path d="M16.500 4.500l2 3-2 3-2-3z" fill="#7a9" stroke="#353"/></svg></div>
      <div><svg viewBox="0 0 22 22"><path d="M2 17.500h15.500V3" fill="none" stroke="#111" stroke-dasharray="1.500 1"/><path d="M7 5.500l2 2.500-2 2.500L5 8z" fill="#7a9" stroke="#353"/></svg></div>
      <hr>
      <div class="on"><svg><use href="#snap"/></svg></div>
      <div><svg viewBox="0 0 22 22"><path d="M3 4c11-2 14 7 10 14 3-2 5-3 6-6M10 17l3 1" fill="none" stroke="#1c7f1c" stroke-width="1.500"/></svg></div>
      <div><svg viewBox="0 0 22 22"><path d="M4 18L18 3M2 14l17-6" stroke="#666"/><path d="M11 8l3 3-3 3-3-3z" fill="#2a8" stroke="#175"/></svg></div>
      <div class="on"><svg viewBox="0 0 22 22"><path d="M3 4c11-2 13 4 10 12 3 0 5-2 6-5" fill="none" stroke="#777" stroke-width="1.300"/><path d="M12 13.500l3 3-3 3-3-3z" fill="#7c9" stroke="#175"/></svg></div>
      <div><svg viewBox="0 0 22 22"><path d="M3 3c11-2 13 6 11 13 3-1 4-2 5-5M10 14l4 3" fill="none" stroke="#777" stroke-width="1.300"/><path d="M9 3h4v4H9z" fill="#9cc" stroke="#175" stroke-width="1.300"/></svg></div>
      <div><svg viewBox="0 0 22 22"><path d="M4 18L19 4" stroke="#777"/><path d="M3 19l4-7M6 19l4-7M2 16h7M14 9l4-7M17 9l3-7M13 6h7" stroke="#d22" stroke-width="1.100"/><circle cx="11.500" cy="11" r="2.200" fill="#6b9" stroke="#175"/></svg></div>
      <hr>
      <div class="on"><svg><use href="#snap"/></svg></div>
      <div><svg viewBox="0 0 22 22"><path d="M3 18.500h14.500V4" fill="none" stroke="#999"/><circle cx="9" cy="10" r="2" fill="#7ca" stroke="#1a7a1a" stroke-width="1.300"/></svg></div>
      <div><svg viewBox="0 0 22 22"><path d="M3 18.500h14.500V6" fill="none" stroke="#111" stroke-width="1.300" stroke-dasharray="2 1.500"/><path d="M4 9.500h9M8.500 5v9" stroke="#333"/></svg></div>
      <div><svg viewBox="0 0 22 22"><text x="4" y="17" class="glyph s">A</text><path d="M4 18h15" stroke="#184"/><circle cx="5" cy="18" r="2" fill="#7ca" stroke="#1a7a1a" stroke-width="1.300"/></svg></div>
      <hr>
      <div><svg viewBox="0 0 22 22"><path d="M5.500 3.500h11v15h-11z" fill="url(#grey)" stroke="#111"/></svg></div>
      <div class="on"><svg viewBox="0 0 22 22"><path d="M5.500 2v18M10.500 2v18M15.500 2v18M2 5.500h18M2 10.500h18M2 15.500h18" stroke="#22e" stroke-width="1.300"/></svg></div>
      <div class="on"><svg viewBox="0 0 22 22"><path d="M3.500 2v18M17.500 2v18M8 20l6-18" stroke="#22e" stroke-width="1.300"/></svg></div>
    </aside>
  </main>

  <div class="palette">
    <svg class="none" viewBox="0 0 16 16"><path d="M0 0h16v16H0z" fill="#fff"/><path d="M1 1l14 14M15 1L1 15" stroke="#7a1010" stroke-width="1.300"/></svg>
    <i style="background:#191d57"></i><i style="background:#242b85"></i><i style="background:#3139ae"></i><i style="background:#e6e7f3"></i><i style="background:#8e92d2"></i><i style="background:#3139ae"></i><i style="background:#f6e3e5"></i><i style="background:#cc7f80"></i><i style="background:#a31a1f"></i><i style="background:#e7ede3"></i><i style="background:#89a67a"></i><i style="background:#2a5a0c"></i><i style="background:#e3e3e3"></i><i style="background:#dfe0f3"></i><i style="background:#fff"></i><i style="background:#000"></i><i style="background:#c1c2e7"></i><i style="background:#cccdeb"></i><i style="background:#d6d7ef"></i><i style="background:#e9eaf6"></i><i style="background:#d5d6ef"></i><i style="background:#6669c1"></i><i style="background:#f9e3e4"></i><i style="background:#f3caca"></i><i style="background:#de2c2c"></i><i style="background:#e7f0e3"></i><i style="background:#d1e4c9"></i><i style="background:#3b8013"></i><i style="background:#e3e3e3"></i><i style="background:#dfe0f3"></i><i style="background:#fff"></i><i style="background:#000"></i><i style="background:#3c4872"></i><i style="background:#414e7a"></i><i style="background:#445180"></i><i style="background:#5567a3"></i><i style="background:#7480b2"></i><i style="background:#b3b8cc"></i><i style="background:#cc7f80"></i><i style="background:#b92020"></i><i style="background:#8aa67a"></i><i style="background:#397d0f"></i><i style="background:#fff"></i><i style="background:#ccc"></i><i style="background:#a9a9a9"></i><i style="background:#999"></i><i style="background:#808080"></i><i style="background:#4d4d4d"></i><i style="background:#000"></i><i style="background:#000b35"></i><i style="background:#000848"></i><i style="background:#000b5a"></i><i style="background:#001080"></i><i style="background:#001070"></i><i style="background:#000b58"></i><i style="background:#6b6eb8"></i><i style="background:#bfc0fa"></i><i style="background:#1c248f"></i><i style="background:#403e5e"></i><i style="background:#e08e88"></i><i style="background:#c84434"></i><i style="background:#a0e068"></i><i style="background:#69b62a"></i><i style="background:#e9e286"></i><i style="background:#dcd02e"></i><i style="background:#fff"></i><i style="background:#000"></i><i style="background:#404040"></i><i style="background:#808080"></i><i style="background:#999"></i><i style="background:#ccc"></i><i style="background:#fff"></i><i style="background:#a9a9a9"></i><i style="background:#808080"></i><i style="background:#dd8e8e"></i><i style="background:#b92020"></i><i style="background:#9dbd88"></i><i style="background:#3b7d0f"></i><i style="background:#999cd6"></i><i class="last" style="background:#3139ae"></i>
    <svg class="pm" viewBox="0 0 5 10"><path d="M5 0v10L0 5z" fill="#2d3436"/></svg>
    <div class="scroll"></div>
  </div>

  <footer class="status">
    <div class="style"><span>Заливка:</span><i class="f"></i><span>Обводка:</span><div class="st"><i class="s"></i><em>0,5</em></div></div>
    <label>Н:</label>
    <div class="spin"><b>0</b><span><svg class="dim"><use href="#up"/></svg><svg><use href="#down"/></svg></span></div>
    <svg class="eye" viewBox="0 0 14 12"><path d="M1 6q6-5.500 12 0-6 5.500-12 0M2 3l1.500 1.500M5 1l.7 2M9 1l-.7 2M12 3l-1.500 1.500M3 10.500L4 9M7 12v-2M11 10.500L10 9" fill="none" stroke="#222"/><circle cx="7" cy="6" r="2.200"/></svg>
    <svg class="lock"><use href="#lock"/></svg>
    <div class="combo layer"><span>•Layer 1</span><svg><use href="#down"/></svg></div>
    <p><b>Ctrl:</b> щелчок выделяет в группе; перетаскивание двигает по горизонтали/вертикали</p>
    <div class="xy"><span>X:</span><span>159,03</span><span>Y:</span><span>151,27</span></div>
    <label>Z:</label>
    <div class="spin z"><b>99%</b><span><svg><use href="#up"/></svg><svg><use href="#down"/></svg></span></div>
  </footer>
</div>
</body>
</html>
```
FILE: styles.css
```css
* { box-sizing: border-box; }
body { margin: 0; font: 600 14px "Open Sans", "Noto Sans", sans-serif; color: #2d3436; background: #e8e8e6; white-space: nowrap; }
.defs { position: absolute; }
.window { width: 1309px; height: 839px; overflow: hidden; padding-left: 1px; background: linear-gradient(to right, #bdbdbb 1px, #e8e8e6 1px, #e8e8e6 1307px, #b5b5b3 1307px); display: grid; grid-template-rows: 24px 25px 40px 701px 16px 33px; border-bottom: 1px solid #aaa; }
svg { display: block; flex: none; overflow: visible; }
label { text-align: center; font-size: 13px; }

.titlebar { display: grid; grid-template-columns: 60px 1fr 65px; align-items: center; background: #444; color: #dcdcdc; text-align: center; font-weight: 700; width: 1306px; font-size: 13px; }
.wm { width: 60px; height: 24px; fill: none; stroke: #dcdcdc; }
.title { letter-spacing: .12px; padding-bottom: 1px; }

.menu { display: flex; align-items: center; gap: 16.2px; padding: 0 8px; border-bottom: 1px solid #c9c9c7; width: 1306px; }

.toolbar { display: grid; align-items: center; justify-items: center; padding-left: 4px; grid-template-columns: 28px 28px 28px 12px 28px 28px 28px 27px 13px 28px 28px 28px 28px 10px 27px 78px 25px 78px 30px 78px 28px 26px 78px 2px 44px 13px repeat(4, 28px); }
.toolbar label { padding-left: 4px; }
.ic { width: 22px; height: 22px; }
.line { fill: none; stroke: #7478cc; stroke-width: 1.6; }
.vsep { width: 1px; height: 19px; background: #c6c6c4; }
.lock { width: 12px; height: 12px; }
.tog { width: 27px; height: 30px; border: 1px solid #b4b4b2; border-radius: 3px; background: #d9d9d7; display: grid; place-items: center; }
.tog .ic { width: 17px; height: 17px; }

.spin { width: 100%; height: 29px; border: 1px solid #b4b4b0; border-radius: 4px; background: #fff; display: flex; color: #000; overflow: hidden; }
.spin b { flex: 1; align-self: center; padding: 0 0 2px 9px; font-size: 12px; font-weight: 700; letter-spacing: .1px; }
.spin span { width: 15px; border-left: 1px solid #dcdcdc; display: grid; grid-template-rows: 1fr 1fr; place-items: center; background: linear-gradient(#dcdcdc, #dcdcdc) center / 100% 1px no-repeat; }
.spin span svg, .ar svg, .combo svg, .tri { width: 9px; height: 5px; fill: #2d3436; }
svg.dim { opacity: .5; }
.combo { border: 1px solid #b0b0ae; border-radius: 3px; background: linear-gradient(#e9e9e7, #cfcfcd); display: flex; align-items: center; justify-content: space-between; }
.combo span { flex: 1; }
.unit { width: 44px; height: 22px; padding: 0 3px; font-size: 12.500px; }
.unit svg { margin-right: 1px; }

.work { display: grid; grid-template-columns: 39px 779px 412px 37px 28px; }
.tools { padding-top: 4px; }
.tools div { width: 28px; height: 28px; margin: 1px 0 2px 5px; display: grid; place-items: center; }
.tools div.on, .cmds .on { border: 1px solid #b4b4b2; border-radius: 3px; background: #d9d9d7; }
.tools svg { width: 22px; height: 22px; }
.glyph { font: 700 26px "DejaVu Sans", sans-serif; fill: #111; }
.glyph.s { font-size: 20px; }
.paper pattern path, .edge { stroke: #2d3436; fill: none; }
.rl { font: 600 9.500px "Open Sans", sans-serif; fill: #2d3436; }
.note { font: 40px "DejaVu Sans", sans-serif; }

.dock { border-left: 1px solid #b4b4b2; padding: 3px 0 0 7px; }
.dock-head { display: flex; align-items: center; height: 26px; padding: 0 7px 1px 0; }
.fs { width: 16px; height: 16px; }
.ttl { flex: 1; margin-left: 1px; padding-bottom: 1px; letter-spacing: .05px; }
.mini { width: 11px; height: 11px; margin-left: 15px; fill: none; stroke: #888; }
.frame { width: 404px; height: 468px; border: 1px solid #b4b4b2; padding: 3px 3px 0; display: flex; flex-direction: column; }
.tabs { display: flex; align-items: flex-end; height: 28px; margin-bottom: -1px; z-index: 1; }
.tab { height: 26px; border: 1px solid #b4b4b2; border-radius: 4px 4px 0 0; background: #f0f0ee; display: flex; align-items: center; gap: 5px; padding-left: 6px; }
.tab svg { width: 12px; height: 12px; }
.t1 { width: 89px; border-right: 0; gap: 6px; }
.t2 { width: 95px; height: 28px; background: #fff; border-bottom-color: #fff; }
.t3 { width: 137px; border-left: 0; padding-left: 5px; }
.page { height: 337px; background: #fff; border: 1px solid #b4b4b2; padding: 8px 11px 0 11px; }
.paints { display: flex; height: 32px; }
.paints div { width: 30px; height: 32px; margin-right: 2px; display: grid; place-items: center; }
.paints div:first-child { margin-right: 4px; }
.paints div:nth-child(5) { margin-right: 3px; }
.paints div:nth-child(6) { margin-right: 4px; }
.paints .on { border: 1px solid #b4b4b2; border-radius: 4px; background: #d9d9d7; }
.paints svg { width: 20px; height: 20px; }
.q { font: 700 21px "DejaVu Sans", sans-serif; color: #000; padding-left: 2px; }
h3 { margin: 8px 0 4px -1px; height: 20px; font-size: 14px; line-height: 20px; font-weight: 700; }
.modes { display: flex; gap: 4px; height: 26px; margin-bottom: 4px; }
.modes span { flex: none; width: 71px; border: 1px solid #b0b0ae; border-bottom-color: #999; border-radius: 3px; background: linear-gradient(#ebebe9, #d3d3d1); text-align: center; font-size: 11.500px; line-height: 23px; }
.modes span:last-child { width: 72px; }
.modes .on { background: #d8d8d6; }
.chan { display: grid; grid-template-columns: 29px 258px 68px; height: 34px; margin-bottom: 2px; align-items: center; }
.chan label { font-size: 14px; padding: 0 1px 3px 0; }
.chan .spin { height: 32px; margin-left: 9px; width: 68px; }
.chan .spin b { font-size: 14px; letter-spacing: -.2px; }
.chan .spin span { width: 16px; }
.bar { height: 34px; border: 1px solid #000; overflow: hidden; }
.bar svg { width: 256px; height: 32px; }
.r { background: linear-gradient(to right, #0039ae, #ff39ae); }
.g { background: linear-gradient(to right, #3100ae, #31ffae); }
.b { background: linear-gradient(to right, #313900, #3139ff); }
.rgba { display: flex; align-items: center; margin: 55px 0 0 1px; height: 32px; }
.cm { width: 18px; height: 32px; margin-right: 4px; }
.dp { width: 20px; height: 20px; margin-left: 7px; }
.rgba label { margin-left: auto; font-size: 12px; }
.hex { width: 76px; height: 29px; margin: 0 0 1px 2px; border: 1px solid #b4b4b0; border-radius: 4px; padding-left: 9px; font-size: 12px; line-height: 25px; color: #000; }
.slide { height: 35px; margin-top: 4px; background: #fff; display: flex; padding: 1px 2px 1px 1px; color: #000; }
.box { flex: none; width: 377px; border: 1px solid #b4b4b0; border-right: 0; border-radius: 4px 0 0 4px; padding: 0 11px 0 6px; }
.box, .fill { display: flex; align-items: center; justify-content: space-between; }
.full .box { padding: 2px 4px 2px 2px; }
.fill { flex: 1; height: 27px; background: #4a90d9; color: #fff; padding: 0 7px 0 4px; }
.ar { flex: 1; display: grid; place-items: center; grid-template-rows: 1fr 1fr; }
.iconified { width: 402px; height: 27px; margin: 4px 0 0 2px; border: 1px solid #b0b0ae; border-bottom-color: #999; border-radius: 3px; background: linear-gradient(#ebebe9, #d0d0ce); display: flex; align-items: center; padding: 0 7px 0 4px; }
.iconified.dark { background: #d8d8d6; }
.iconified .ttl { margin-left: 3px; padding: 0; }
.dock > hr { margin: 9px 0 0 -2px; border: 0; border-top: 1px solid #b0b0ae; width: 408px; }

.cmds { padding: 4px 0 0 8px; display: flex; flex-direction: column; }
.cmds div { flex: none; width: 28px; height: 28px; display: grid; place-items: center; }
.cmds svg { width: 22px; height: 22px; }
.cmds svg.fs { width: 16px; height: 16px; }
.cmds hr { margin: 5px 0 6px 6px; width: 16px; border: 0; border-top: 1px solid #c6c6c4; }
.cmds .more { margin-top: 14px; }
.snaps { padding-left: 7px; }
.snaps .on { width: 26px; height: 26px; margin: 1px; }

.palette { display: flex; padding-left: 1px; align-items: flex-start; position: relative; }
.palette i, .none { width: 16px; height: 16px; flex: none; }
.palette i.last { width: 12px; }
.pm { width: 5px; height: 10px; margin-left: 4px; }
.scroll { position: absolute; left: 0; top: 14px; width: 762px; height: 3px; background: #4a90d9; }

.status { display: grid; grid-template-columns: 123px 18px 46px 38px 12px 9px 88px 827px 70px 20px 55px; align-items: center; justify-items: center; padding-bottom: 1px; }
.status label { font-size: 12px; }
.status .spin b { padding: 0 0 1px 9px; }
.status .spin.z b { padding-left: 16px; font-weight: 600; font-size: 13px; letter-spacing: -.8px; overflow: hidden; }
.status .spin.z span { flex: none; }
.style { display: grid; grid-template-columns: 57px 64px; grid-template-rows: 15px 16px; width: 100%; padding-left: 2px; font-size: 11.300px; line-height: 14px; align-self: end; }
.f { background: #de2c2c; height: 14px; }
.st { display: flex; gap: 3px; }
.st em { font-style: normal; }
.s { width: 44px; height: 15px; background: #3139ae; }
.eye { width: 14px; height: 12px; }
.layer { grid-column: 7; width: 88px; height: 28px; padding: 0 9px 0 8px; font-size: 12px; }
.status p { margin: 0 0 0 2px; justify-self: start; font-size: 14px; letter-spacing: -.07px; }
.xy { display: grid; grid-template-columns: 20px 50px; font: 13.500px/15px "DejaVu Sans Mono", monospace; letter-spacing: -.9px; }
.xy span:nth-child(odd) { font: 600 12px/15px "Open Sans", sans-serif; }
```
